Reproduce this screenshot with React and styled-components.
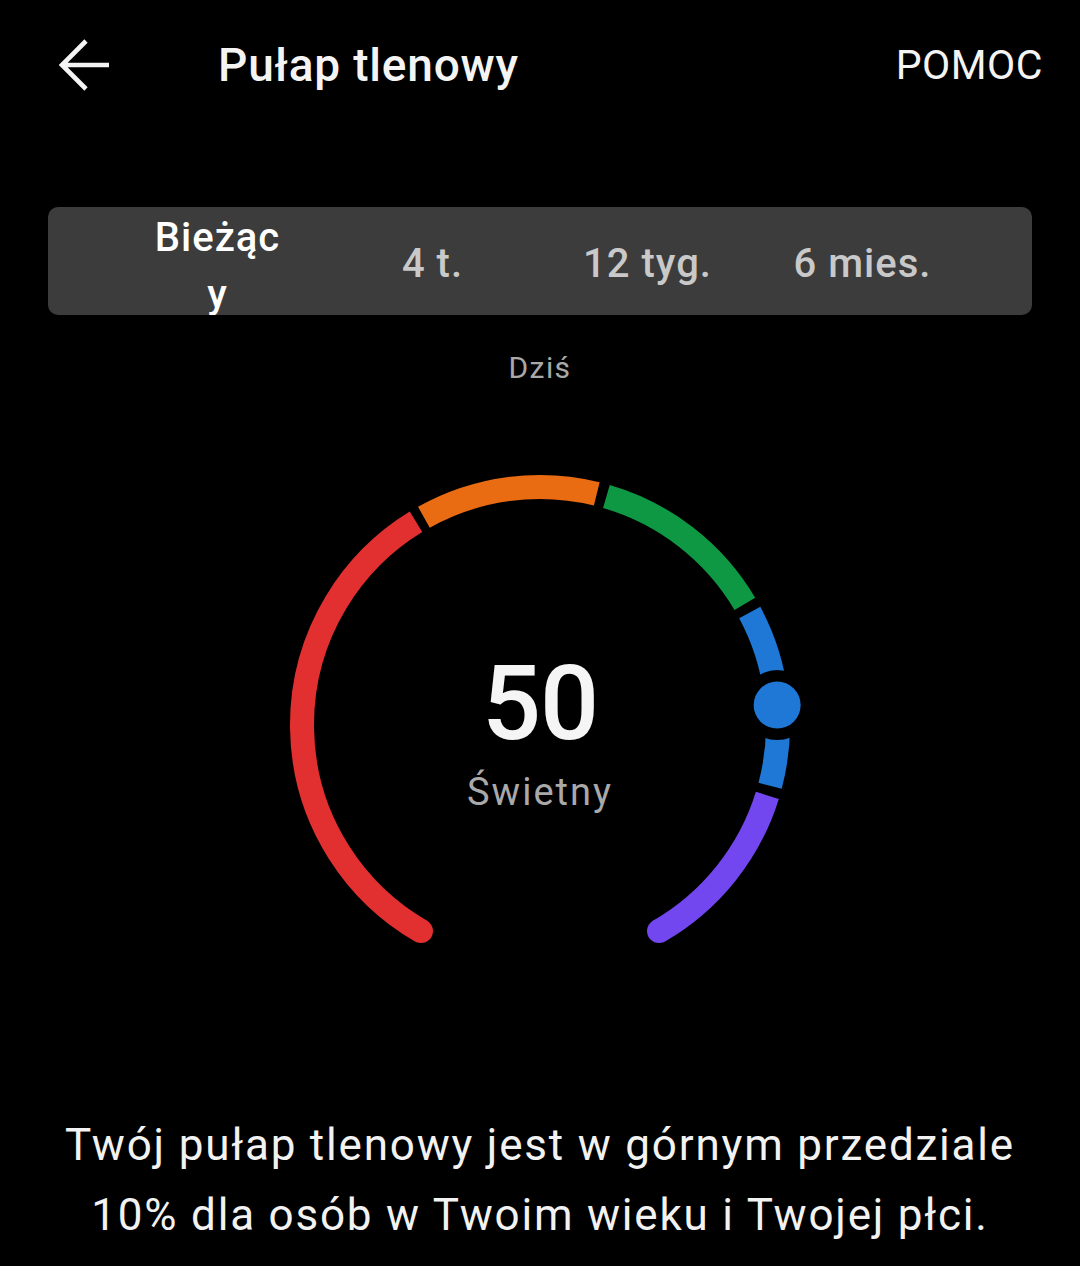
import React from 'react';
import styled, { createGlobalStyle } from 'styled-components';

const GlobalStyle = createGlobalStyle`
  html, body {
    margin: 0;
    padding: 0;
    background: #000000;
  }
  body {
    font-family: Roboto, "Noto Sans", "Liberation Sans", sans-serif;
    color: #f2f2f2;
  }
`;

const Page = styled.div`
  width: 1080px;
  height: 1266px;
  background: #000000;
  overflow: hidden;
  display: flex;
  flex-direction: column;
  align-items: stretch;
`;

const Header = styled.header`
  height: 130px;
  display: flex;
  align-items: center;
  padding: 0 37px 0 58px;
`;

const BackButton = styled.button`
  width: 52px;
  height: 52px;
  padding: 0;
  border: none;
  background: none;
  display: flex;
  align-items: center;
  justify-content: center;
  cursor: pointer;
`;

const Title = styled.h1`
  margin: 0 0 0 108px;
  font-size: 46px;
  font-weight: 500;
  color: #f4f4f4;
  letter-spacing: 0.8px;
`;

const HelpLink = styled.a`
  margin-left: auto;
  font-size: 41px;
  font-weight: 400;
  color: #f4f4f4;
  letter-spacing: 0.5px;
  text-decoration: none;
`;

const Tabs = styled.div`
  margin: 77px 48px 0;
  height: 108px;
  background: #3c3c3c;
  border-radius: 10px;
  padding: 0 62px;
  overflow: hidden;
  display: grid;
  grid-template-columns: repeat(4, 1fr);
  grid-template-rows: 108px;
  align-items: center;
`;

const Tab = styled.div`
  justify-self: center;
  align-self: ${(p) => (p.$active ? 'start' : 'center')};
  padding-top: ${(p) => (p.$active ? '2px' : '5px')};
  text-align: center;
  font-size: 40px;
  font-weight: 500;
  letter-spacing: 1px;
  line-height: ${(p) => (p.$active ? '57px' : '54px')};
  color: ${(p) => (p.$active ? '#ffffff' : '#c9c9c9')};
  max-width: ${(p) => (p.$active ? '136px' : 'none')};
  word-break: break-all;
`;

const DayLabel = styled.div`
  margin-top: 33px;
  text-align: center;
  font-size: 30px;
  line-height: 40px;
  letter-spacing: 1.4px;
  color: #a8a8a8;
`;

const GaugeWrap = styled.div`
  margin: 57px auto 0;
  width: 560px;
  height: 560px;
  display: grid;
  & > * {
    grid-area: 1 / 1;
  }
`;

const GaugeCenter = styled.div`
  margin-top: 207px;
  display: flex;
  flex-direction: column;
  align-items: center;
`;

const Score = styled.div`
  font-size: 104px;
  font-weight: 500;
  line-height: 104px;
  color: #f5f5f5;
  letter-spacing: -1px;
`;

const Rating = styled.div`
  margin-top: 15px;
  font-size: 38px;
  line-height: 43px;
  letter-spacing: 2px;
  color: #a9a9a9;
`;

const Summary = styled.p`
  margin: 105px 0 0;
  text-align: center;
  font-size: 44px;
  line-height: 70px;
  letter-spacing: 1.8px;
  color: #f2f2f2;
`;

const CX = 280;
const CY = 280;
const R = 238;
const STROKE = 24;

const pt = (a) => {
  const rad = (a * Math.PI) / 180;
  return [CX + R * Math.sin(rad), CY - R * Math.cos(rad)];
};

const arc = (a1, a2) => {
  const [x1, y1] = pt(a1);
  const [x2, y2] = pt(a2);
  const large = a2 - a1 > 180 ? 1 : 0;
  return `M ${x1} ${y1} A ${R} ${R} 0 ${large} 1 ${x2} ${y2}`;
};

const segments = [
  { from: -150, to: -31.4, color: '#e1302f' },
  { from: -29.2, to: 13.8, color: '#e96b12' },
  { from: 16.2, to: 59.4, color: '#0e9843' },
  { from: 61.8, to: 104.8, color: '#1f77d6' },
  { from: 107.2, to: 150, color: '#7347f0' },
];

const Gauge = ({ marker }) => {
  const [sx, sy] = pt(-150);
  const [ex, ey] = pt(150);
  const [mx, my] = pt(marker);
  return (
    <svg width="560" height="560" viewBox="0 0 560 560">
      {segments.map((s) => (
        <path
          key={s.from}
          d={arc(s.from, s.to)}
          fill="none"
          stroke={s.color}
          strokeWidth={STROKE}
        />
      ))}
      <circle cx={sx} cy={sy} r={STROKE / 2} fill="#e1302f" />
      <circle cx={ex} cy={ey} r={STROKE / 2} fill="#7347f0" />
      <circle cx={mx} cy={my} r="35" fill="#000000" />
      <circle cx={mx} cy={my} r="23.5" fill="#1f77d6" />
    </svg>
  );
};

const tabs = ['Bieżący', '4 t.', '12 tyg.', '6 mies.'];

export default function App() {
  return (
    <Page>
      <GlobalStyle />
      <Header>
        <BackButton aria-label="Wstecz">
          <svg width="52" height="52" viewBox="0 0 52 52">
            <path
              d="M4 26 H51 M28 2 L4 26 L28 50"
              fill="none"
              stroke="#f4f4f4"
              strokeWidth="4.6"
            />
          </svg>
        </BackButton>
        <Title>Pułap tlenowy</Title>
        <HelpLink href="#">POMOC</HelpLink>
      </Header>

      <Tabs>
        {tabs.map((t, i) => (
          <Tab key={t} $active={i === 0}>
            {t}
          </Tab>
        ))}
      </Tabs>

      <DayLabel>Dziś</DayLabel>

      <GaugeWrap>
        <Gauge marker={85.2} />
        <GaugeCenter>
          <Score>50</Score>
          <Rating>Świetny</Rating>
        </GaugeCenter>
      </GaugeWrap>

      <Summary>
        Twój pułap tlenowy jest w górnym przedziale
        <br />
        10% dla osób w Twoim wieku i Twojej płci.
      </Summary>
    </Page>
  );
}
